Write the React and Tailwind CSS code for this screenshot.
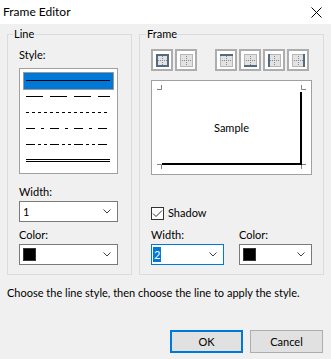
import React from "react";

function Chevron() {
  return (
    <svg width="8" height="5" viewBox="0 0 8 5">
      <path d="M0.5 0.5 L4 4 L7.5 0.5" fill="none" stroke="#404040" strokeWidth="1" />
    </svg>
  );
}

function LineSvg({ dash, dbl, color = "#000" }) {
  return (
    <svg width="89" height="16" viewBox="0 0 89 16" className="block">
      {dbl ? (
        <>
          <line x1="2" x2="86" y1="6.5" y2="6.5" stroke={color} strokeWidth="1" />
          <line x1="2" x2="86" y1="8.5" y2="8.5" stroke={color} strokeWidth="1" />
        </>
      ) : (
        <line x1="2" x2="86" y1="7.5" y2="7.5" stroke={color} strokeWidth="1" strokeDasharray={dash} />
      )}
    </svg>
  );
}

function FrameIcon({ side }) {
  const c = "#546a80";
  return (
    <svg width="13" height="13" viewBox="0 0 13 13" className="block">
      <rect x="0" y="0" width="13" height="13" fill="#e2e2e2" />
      <rect x="0.5" y="0.5" width="12" height="12" fill="none" stroke="#8a8a8a" strokeWidth="1" strokeDasharray="1 1" />
      <line x1="6.5" x2="6.5" y1="2" y2="12" stroke="#8a8a8a" strokeWidth="1" strokeDasharray="1 1" />
      <line x1="2" x2="12" y1="6.5" y2="6.5" stroke="#8a8a8a" strokeWidth="1" strokeDasharray="1 1" />
      {side === "all" && <rect x="1" y="1" width="11" height="11" fill="none" stroke={c} strokeWidth="2" />}
      {side === "top" && <rect x="0" y="0" width="13" height="2" fill={c} />}
      {side === "bottom" && <rect x="0" y="11" width="13" height="2" fill={c} />}
      {side === "left" && <rect x="0" y="0" width="2" height="13" fill={c} />}
      {side === "right" && <rect x="11" y="0" width="2" height="13" fill={c} />}
    </svg>
  );
}

function FrameButton({ side }) {
  return (
    <div className="w-[22px] h-[22px] border-2 border-[#adadad] bg-white flex items-center justify-center">
      <FrameIcon side={side} />
    </div>
  );
}

export default function App() {
  return (
    <div className="w-[331px] h-[359px] bg-[#f0f0f0] text-[11px] leading-[16px] text-black font-['Lato',sans-serif] flex flex-col overflow-hidden">
      <div className="h-[24px] bg-white flex items-center justify-between pl-[3px] pr-[9px] shrink-0 text-[12px]">
        <span>Frame Editor</span>
        <svg width="11" height="11" viewBox="0 0 11 11">
          <path d="M0.5 0.5 L10.5 10.5 M10.5 0.5 L0.5 10.5" stroke="#000" strokeWidth="1" fill="none" />
        </svg>
      </div>

      <div className="flex gap-[7px] pl-[7px] pt-[2px]">
        <fieldset className="w-[125px] border border-[#dcdcdc]">
          <legend className="ml-[5px] px-[1px]">Line</legend>
          <div className="flex flex-col pl-[11px] pb-[9px]">
            <div className="mt-[5px]">Style:</div>
            <div className="mt-[5px] w-[99px] h-[106px] border border-[#a0a0a0] bg-white p-[4px] flex flex-col">
              <div className="bg-[#0078d7] outline outline-1 outline-[#9a9a9a]">
                <LineSvg />
              </div>
              <LineSvg dash="17 7" />
              <LineSvg dash="3 3" />
              <LineSvg dash="9 6 3 6" />
              <LineSvg dash="9 3 3 3 3 3" />
              <LineSvg dbl />
            </div>
            <div className="mt-[10px]">Width:</div>
            <div className="mt-[1px] w-[99px] h-[21px] bg-white border border-[#7a7a7a] flex items-center justify-between pl-[3px] pr-[6px]">
              <span>1</span>
              <Chevron />
            </div>
            <div className="mt-[5px]">Color:</div>
            <div className="mt-[1px] w-[99px] h-[21px] bg-white border border-[#7a7a7a] flex items-center justify-between pl-[3px] pr-[6px]">
              <span className="w-[13px] h-[13px] bg-black border border-[#333]" />
              <Chevron />
            </div>
          </div>
        </fieldset>

        <fieldset className="w-[185px] border border-[#dcdcdc]">
          <legend className="ml-[6px] px-[1px]">Frame</legend>
          <div className="flex flex-col pl-[11px] pb-[9px]">
            <div className="mt-[7px] flex">
              <div className="flex gap-[2px]">
                <FrameButton side="all" />
                <FrameButton side="none" />
              </div>
              <div className="flex gap-[2px] ml-[18px]">
                <FrameButton side="top" />
                <FrameButton side="bottom" />
                <FrameButton side="left" />
                <FrameButton side="right" />
              </div>
            </div>
            <div className="mt-[9px] w-[161px] h-[95px] border border-[#a0a0a0] bg-white relative flex items-center justify-center">
              <svg width="159" height="93" viewBox="0 0 159 93" className="absolute left-0 top-0">
                <path d="M5 8.5 H9.5 V4 M149.5 4 V8.5 H154 M5 83.5 H9.5 V88 M149.5 88 V83.5 H154" fill="none" stroke="#808080" strokeWidth="1" />
                <rect x="10" y="82" width="140" height="2" fill="#000" />
                <rect x="148" y="11" width="2" height="73" fill="#000" />
              </svg>
              <span className="relative">Sample</span>
            </div>
            <div className="mt-[30px] h-[16px] flex items-center gap-[4px]">
              <div className="w-[13px] h-[13px] border border-[#333] bg-white flex items-center justify-center">
                <svg width="11" height="11" viewBox="0 0 11 11">
                  <path d="M1 5.5 L4 8.5 L10 2.5" fill="none" stroke="#333" strokeWidth="1" />
                </svg>
              </div>
              <span>Shadow</span>
            </div>
            <div className="mt-[6px] flex gap-[15px]">
              <div className="w-[73px]">Width:</div>
              <div className="w-[73px]">Color:</div>
            </div>
            <div className="mt-[1px] flex gap-[15px]">
              <div className="w-[73px] h-[21px] bg-white border border-[#0078d7] flex items-center justify-between pl-[1px] pr-[6px]">
                <span className="bg-[#0078d7] text-white px-[1px] leading-[15px]">2</span>
                <Chevron />
              </div>
              <div className="w-[73px] h-[21px] bg-white border border-[#7a7a7a] flex items-center justify-between pl-[3px] pr-[6px]">
                <span className="w-[13px] h-[13px] bg-black border border-[#333]" />
                <Chevron />
              </div>
            </div>
          </div>
        </fieldset>
      </div>

      <div className="mt-[10px] pl-[7px] whitespace-nowrap">Choose the line style, then choose the line to apply the style.</div>

      <div className="mt-[29px] flex justify-end gap-[7px] pr-[8px]">
        <div className="w-[73px] h-[23px] border-2 border-[#0078d7] bg-[#e1e1e1] flex items-center justify-center">OK</div>
        <div className="w-[73px] h-[23px] border border-[#adadad] bg-[#e1e1e1] flex items-center justify-center">Cancel</div>
      </div>
    </div>
  );
}
